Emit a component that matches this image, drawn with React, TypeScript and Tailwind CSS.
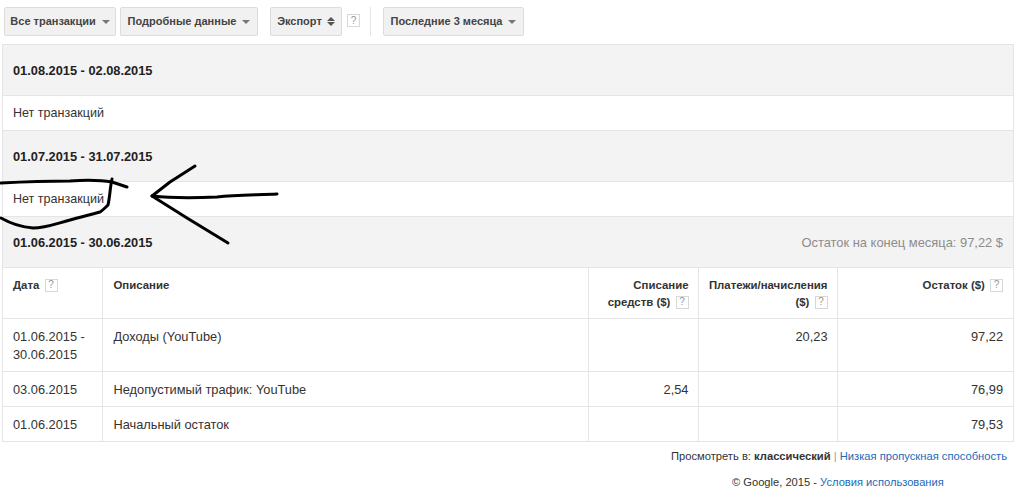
const font = { fontFamily: '"Liberation Sans", Arial, sans-serif' };

const Help = () => (
  <span className="inline-flex h-[13px] w-[13px] items-center justify-center border border-[#d8d8d8] bg-white align-[1px] text-[10px] font-normal leading-none text-[#999999]">
    ?
  </span>
);

const Caret = () => <span className="ml-[6px] inline-block border-x-[4px] border-t-[4px] border-x-transparent border-t-[#777777]" />;

const ToolButton = ({ label, className }: { label: string; className: string }) => (
  <button className={`flex h-[29px] items-center justify-center rounded-[2px] border border-[#dcdcdc] bg-[#f1f1f1] text-[11px] font-bold text-[#444444] ${className}`}>
    {label}
    <Caret />
  </button>
);

const PeriodHeader = ({ period, balance }: { period: string; balance?: string }) => (
  <div className="flex h-[51px] items-center justify-between border-b border-[#e5e5e5] bg-[#f3f3f3] pb-[1px] pl-[10px] pr-[10px] pt-[2px]">
    <span className="text-[12.8px] font-bold text-[#222222]">{period}</span>
    {balance && <span className="text-[12.9px] text-[#8c8c8c]">{balance}</span>}
  </div>
);

const EmptyRow = () => (
  <div className="flex h-[35px] items-center border-b border-[#e5e5e5] bg-white pl-[10px] pt-[1px] text-[12.55px] text-[#333333]">Нет транзакций</div>
);

const rows = [
  { date: ['01.06.2015 -', '30.06.2015'], text: 'Доходы (YouTube)', debit: '', credit: '20,23', balance: '97,22', h: 'h-[53px]' },
  { date: ['03.06.2015'], text: 'Недопустимый трафик: YouTube', debit: '2,54', credit: '', balance: '76,99', h: 'h-[35px]' },
  { date: ['01.06.2015'], text: 'Начальный остаток', debit: '', credit: '', balance: '79,53', h: 'h-[35px]' },
];

export default function App() {
  return (
    <div className="relative h-[494px] w-[1020px] overflow-hidden bg-white" style={font}>
      <div className="flex h-[44px] items-start pl-[4px] pt-[7px]">
        <ToolButton label="Все транзакции" className="w-[112px]" />
        <ToolButton label="Подробные данные" className="ml-[4px] w-[138px]" />
        <button className="ml-[12px] flex h-[29px] w-[72px] items-center justify-center rounded-[2px] border border-[#dcdcdc] bg-[#f1f1f1] text-[11px] font-bold text-[#444444]">
          Экспорт
          <span className="ml-[5px] flex flex-col gap-[1px]">
            <span className="border-x-[4px] border-b-[4px] border-x-transparent border-b-[#555555]" />
            <span className="border-x-[4px] border-t-[4px] border-x-transparent border-t-[#555555]" />
          </span>
        </button>
        <span className="ml-[5px] mt-[7px] flex"><Help /></span>
        <span className="ml-[10px] h-[29px] w-px bg-[#e5e5e5]" />
        <ToolButton label="Последние 3 месяца" className="ml-[12px] w-[141px]" />
      </div>

      <div className="ml-[2px] w-[1012px] border-x border-t border-[#e5e5e5]">
        <PeriodHeader period="01.08.2015 - 02.08.2015" />
        <EmptyRow />
        <PeriodHeader period="01.07.2015 - 31.07.2015" />
        <EmptyRow />
        <PeriodHeader period="01.06.2015 - 30.06.2015" balance="Остаток на конец месяца: 97,22 $" />

        <table className="w-full table-fixed border-collapse text-[12.8px] text-[#333333]">
          <colgroup>
            <col className="w-[99px]" />
            <col className="w-[486px]" />
            <col className="w-[110px]" />
            <col className="w-[139px]" />
            <col />
          </colgroup>
          <thead>
            <tr className="h-[50px] border-b border-[#e5e5e5] align-top text-[11.4px] font-bold leading-[17px] text-[#333333]">
              <th className="pl-[10px] pt-[9px] text-left font-bold">Дата <span className="ml-[2px]"><Help /></span></th>
              <th className="border-l border-[#e5e5e5] pl-[11px] pt-[9px] text-left font-bold">Описание</th>
              <th className="border-l border-[#e5e5e5] pr-[9px] pt-[9px] text-right font-bold">
                <div>Списание</div>
                <div>средств ($) <span className="ml-[2px]"><Help /></span></div>
              </th>
              <th className="border-l border-[#e5e5e5] pr-[9px] pt-[9px] text-right font-bold">
                <div>Платежи/начисления</div>
                <div>($) <span className="ml-[2px]"><Help /></span></div>
              </th>
              <th className="border-l border-[#e5e5e5] pr-[10px] pt-[9px] text-right font-bold">Остаток ($) <span className="ml-[2px]"><Help /></span></th>
            </tr>
          </thead>
          <tbody>
            {rows.map((row) => (
              <tr key={row.text} className={`${row.h} border-b border-[#e5e5e5] align-top leading-[18px]`}>
                <td className="pl-[10px] pt-[9px]">
                  {row.date.map((line) => (
                    <div key={line}>{line}</div>
                  ))}
                </td>
                <td className="border-l border-[#e5e5e5] pl-[11px] pt-[9px]">{row.text}</td>
                <td className="border-l border-[#e5e5e5] pr-[9px] pt-[9px] text-right">{row.debit}</td>
                <td className="border-l border-[#e5e5e5] pr-[9px] pt-[9px] text-right">{row.credit}</td>
                <td className="border-l border-[#e5e5e5] pr-[10px] pt-[9px] text-right">{row.balance}</td>
              </tr>
            ))}
          </tbody>
        </table>
      </div>

      <div className="mt-[7px] pr-[13px] text-right text-[11.2px] leading-[14px] text-[#333333]">
        Просмотреть в: <b>классический</b> <span className="text-[#999999]">|</span> <span className="text-[#1a6bb8]">Низкая пропускная способность</span>
      </div>
      <div className="mt-[12px] pl-[732px] text-[11.15px] leading-[14px] text-[#333333]">
        © Google, 2015 - <span className="text-[#1a6bb8]">Условия использования</span>
      </div>

      {/* hand-drawn marker over the page */}
      <svg className="absolute left-0 top-0" width="1020" height="494" fill="none" stroke="#000000" strokeWidth="3" strokeLinecap="round" strokeLinejoin="round">
        <path d="M1 183 C20 182 45 181 70 181 C85 180 100 180 112 182 L127 187" />
        <path d="M112 179 C110 188 110 196 108 205 C105 208 103 210 100 212 C90 215 80 217 70 220 C55 224 45 228 33 228 C20 227 8 222 1 218" />
        <path d="M195 166 L170 182 L152 196 L187 218 L228 243" />
        <path d="M152 196 C170 198 195 198 217 197 C235 195 255 195 277 194" />
      </svg>
    </div>
  );
}
